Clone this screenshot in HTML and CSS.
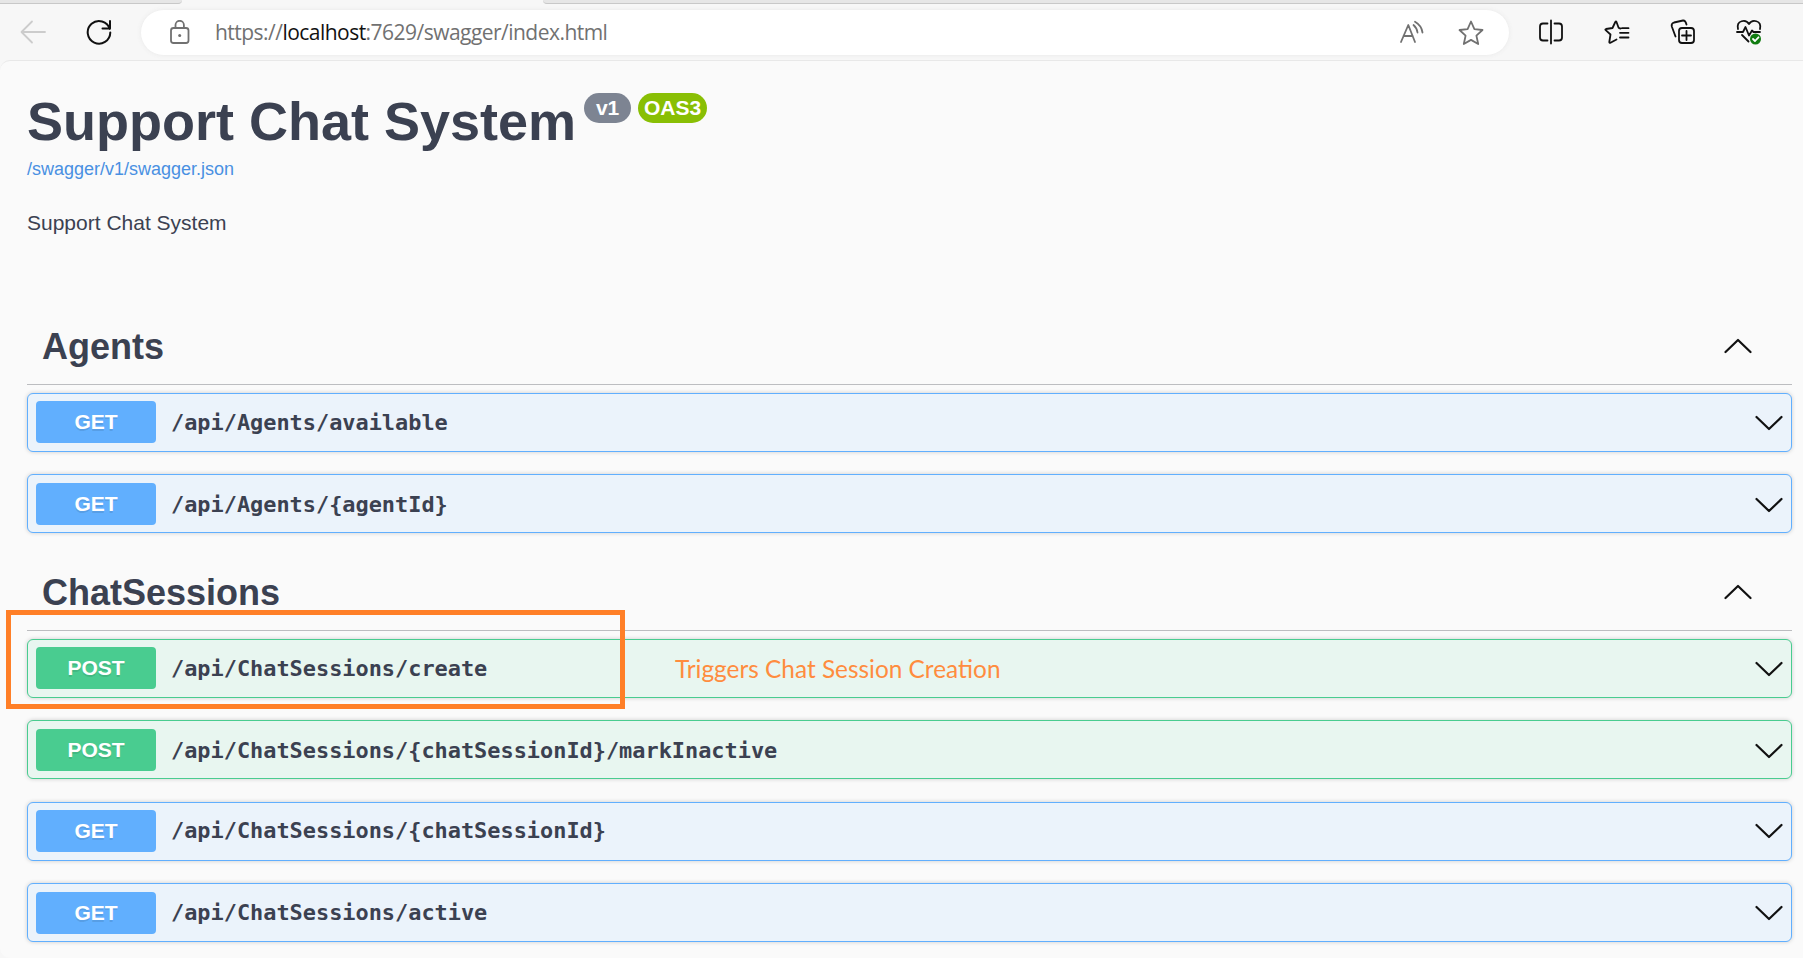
FILE: index.html
```html
<!DOCTYPE html>
<html lang="en">
<head>
<meta charset="utf-8">
<title>Support Chat System</title>
<link rel="stylesheet" href="styles.css">
</head>
<body>
<div class="tabs"><div class="tab-left"></div><div class="tab-active"></div><div class="tab-right"></div></div>
<header class="toolbar">
  <svg class="back" width="26" height="26" viewBox="0 0 26 26"><path d="M25 13H2M12 2.500L1.500 13L12 23.500"/></svg>
  <svg class="reload" width="28" height="28" viewBox="0 0 28 28"><path d="M24.800 11A11.300 11.300 0 1 0 25.300 14.500M25 3V10.500H17.500"/></svg>
  <div class="address">
    <svg class="lock" width="22" height="26" viewBox="0 0 22 26"><rect x="2" y="8" width="17.500" height="15" rx="2.500"/><path d="M6.500 8V5a4.200 4.200 0 0 1 8.400 0V8"/><circle cx="10.700" cy="15.500" r="1.500"/></svg>
    <span class="url">https://<b>localhost</b>:7629/swagger/index.html</span>
    <svg class="read" width="26" height="26" viewBox="0 0 26 26"><path d="M2 22L9.300 5L16 22M4.500 16H13.700M14.500 5Q18 8 18.500 12.500M16 1.800Q22.500 5.500 23.500 12.500"/></svg>
    <svg class="star" width="28" height="28" viewBox="0 0 28 28"><path d="M14 2.500L17.400 10.200L25.500 11L19.400 16.600L21.200 25L14 20.900L6.800 25L8.600 16.600L2.500 11L10.600 10.200Z"/></svg>
  </div>
  <svg class="tool split" width="28" height="28" viewBox="0 0 28 28"><path d="M14 2.500V25.500M10.500 5.500H6Q3 5.500 3 8.500V19.500Q3 22.500 6 22.500H10.500M17.500 5.500H22Q25 5.500 25 8.500V19.500Q25 22.500 22 22.500H17.500"/></svg>
  <svg class="tool favs" width="28" height="28" viewBox="0 0 28 28"><path d="M17.500 10.500Q16 10.500 15.500 9.500L13.500 4Q13 3 12.300 4L9.500 10L3 11Q1.800 11.300 2.700 12.200L7.500 16.500L6.300 24Q6.300 25.300 7.500 24.700L13.500 21.500M17 14.800H25.500M19 10.200H25.500M17 19.500H25.500"/></svg>
  <svg class="tool coll" width="28" height="28" viewBox="0 0 28 28"><rect x="10" y="10" width="15" height="15" rx="3"/><path d="M17.500 13V22M13 17.500H22M6.500 18.500L2.800 8.500Q2 5.500 5 4.500L14 2.500Q16.500 2.200 17.500 6.500"/></svg>
  <svg class="tool health" width="28" height="28" viewBox="0 0 28 28"><path d="M3 11C1 2 11 1 14 6C17 1 27 2 25 11M2 14H8L10.500 9L14 17.500L17 12.500L18.500 14H25M7 17L13.500 23.500"/><circle class="ok" cx="20.500" cy="21" r="5.500"/><path class="tick" d="M18 21L20 23L23.500 19.300"/></svg>
</header>
<main class="page">
  <section class="info">
    <div class="heading"><h1>Support Chat System</h1><span class="pill">v1</span><span class="pill oas">OAS3</span></div>
    <a class="spec">/swagger/v1/swagger.json</a>
    <p class="description">Support Chat System</p>
  </section>
  <section class="group">
    <div class="tag"><h2>Agents</h2><svg class="chevron" width="28" height="16" viewBox="0 0 28 16"><path d="M1.500 14L14 2L26.500 14"/></svg></div>
    <div class="operations">
      <div class="op get"><span class="method">GET</span><code>/api/Agents/available</code><svg class="chevron" width="28" height="16" viewBox="0 0 28 16"><path d="M1.500 2L14 14L26.500 2"/></svg></div>
      <div class="op get"><span class="method">GET</span><code>/api/Agents/{agentId}</code><svg class="chevron" width="28" height="16" viewBox="0 0 28 16"><path d="M1.500 2L14 14L26.500 2"/></svg></div>
    </div>
  </section>
  <section class="group">
    <div class="tag"><h2>ChatSessions</h2><svg class="chevron" width="28" height="16" viewBox="0 0 28 16"><path d="M1.500 14L14 2L26.500 14"/></svg></div>
    <div class="operations">
      <div class="op post"><span class="method">POST</span><code>/api/ChatSessions/create</code><svg class="chevron" width="28" height="16" viewBox="0 0 28 16"><path d="M1.500 2L14 14L26.500 2"/></svg><div class="highlight"></div><span class="note">Triggers Chat Session Creation</span></div>
      <div class="op post"><span class="method">POST</span><code>/api/ChatSessions/{chatSessionId}/markInactive</code><svg class="chevron" width="28" height="16" viewBox="0 0 28 16"><path d="M1.500 2L14 14L26.500 2"/></svg></div>
      <div class="op get"><span class="method">GET</span><code>/api/ChatSessions/{chatSessionId}</code><svg class="chevron" width="28" height="16" viewBox="0 0 28 16"><path d="M1.500 2L14 14L26.500 2"/></svg></div>
      <div class="op get"><span class="method">GET</span><code>/api/ChatSessions/active</code><svg class="chevron" width="28" height="16" viewBox="0 0 28 16"><path d="M1.500 2L14 14L26.500 2"/></svg></div>
    </div>
  </section>
</main>
</body>
</html>
```
FILE: styles.css
```css
* { box-sizing: border-box; }
body { margin: 0; height: 958px; overflow: hidden; display: flex; flex-direction: column; background: #f7f7f7; color: #3b4151; font-family: "Liberation Sans", Arial, sans-serif; }
svg { flex: none; fill: none; stroke: #111; stroke-width: 1.800; stroke-linecap: round; stroke-linejoin: round; }

.tabs { display: flex; height: 4px; flex: none; }
.tab-left, .tab-right { background: #e6e6e6; border-bottom: 1px solid #c8c8c8; }
.tab-left { width: 182px; border-bottom-right-radius: 4px; }
.tab-active { width: 361px; }
.tab-right { flex: 1; border-bottom-left-radius: 4px; }

.toolbar { display: flex; align-items: center; height: 56px; padding: 0 40px 0 20px; flex: none; }
.back { stroke: #ccc; }
.reload { margin-left: 39px; stroke-width: 2; }
.address { display: flex; align-items: center; width: 1368px; height: 45px; margin: 1px 0 0 28px; padding: 0 24px 0 28px; border-radius: 23px; background: #fff; box-shadow: 0 0 5px #e8e8e8; }
.address svg { stroke: #717171; }
.lock circle { fill: #717171; stroke: none; }
.url { margin: -1px 0 0 24px; font: 21px/30px "Open Sans", sans-serif; letter-spacing: -.530px; color: #717171; white-space: nowrap; }
.url b { font-weight: 400; color: #111; }
.read { margin-left: auto; }
.star { margin-left: 32px; }
.split { margin-left: 28px; }
.favs, .coll, .health { margin-left: 38px; }
.health .ok { fill: #107c10; stroke: none; }
.health .tick { stroke: #fff; }

.page { flex: 1; padding: 0 11px 0 27px; background: #fafafa; border-top: 1px solid #e8e8e8; border-radius: 10px 0 0 10px; }
.info { height: 240px; padding-top: 29px; }
.heading { display: flex; align-items: flex-start; }
h1 { margin: 0; font-size: 54px; line-height: 62px; white-space: nowrap; }
.pill { margin: 3px 0 0 8px; width: 47px; height: 30px; border-radius: 15px; background: #7d8492; color: #fff; font-size: 21px; font-weight: 700; line-height: 30px; text-align: center; }
.oas { width: 69px; margin-left: 7px; background: #89bf04; }
.spec { display: block; margin-top: 5px; font-size: 18px; line-height: 24px; color: #4990e2; }
.description { margin: 27px 0 0; font-size: 21px; line-height: 30px; }

.tag { display: flex; align-items: center; justify-content: space-between; height: 84px; padding: 7px 40px 0 15px; border-bottom: 1px solid #bcbdc0; }
h2 { margin: 2px 0 0; font-size: 36px; line-height: 42px; }
.operations { display: grid; gap: 22.250px; padding-top: 8px; }
.op { position: relative; display: flex; align-items: center; height: 59px; padding: 0 8px; border: 1px solid; border-radius: 6px; box-shadow: 0 0 4px rgba(0,0,0,.19); }
.op:nth-child(even) { padding-top: 2px; }
.get { background: #ebf3fb; border-color: #61affe; }
.post { background: #e8f6f0; border-color: #49cc90; }
.method { width: 120px; height: 42px; margin-top: -1px; border-radius: 4px; color: #fff; font-size: 21px; font-weight: 700; line-height: 42px; text-align: center; text-shadow: 0 1.500px 0 rgba(0,0,0,.1); }
.get .method { background: #61affe; }
.post .method { background: #49cc90; }
code { margin-left: 15px; font: 700 21.900px/30px "DejaVu Sans Mono", monospace; white-space: nowrap; }
.op .chevron { margin-left: auto; }
.chevron { stroke-width: 2.200; }
.group + .group { padding-top: 13.750px; }
.highlight { position: absolute; left: -22px; top: -30px; width: 619px; height: 99px; border: 5px solid #ff7f27; }
.note { position: absolute; left: 647px; top: 14px; font: 24.400px/30px Lato, sans-serif; color: #ff8c3e; white-space: nowrap; }
```
